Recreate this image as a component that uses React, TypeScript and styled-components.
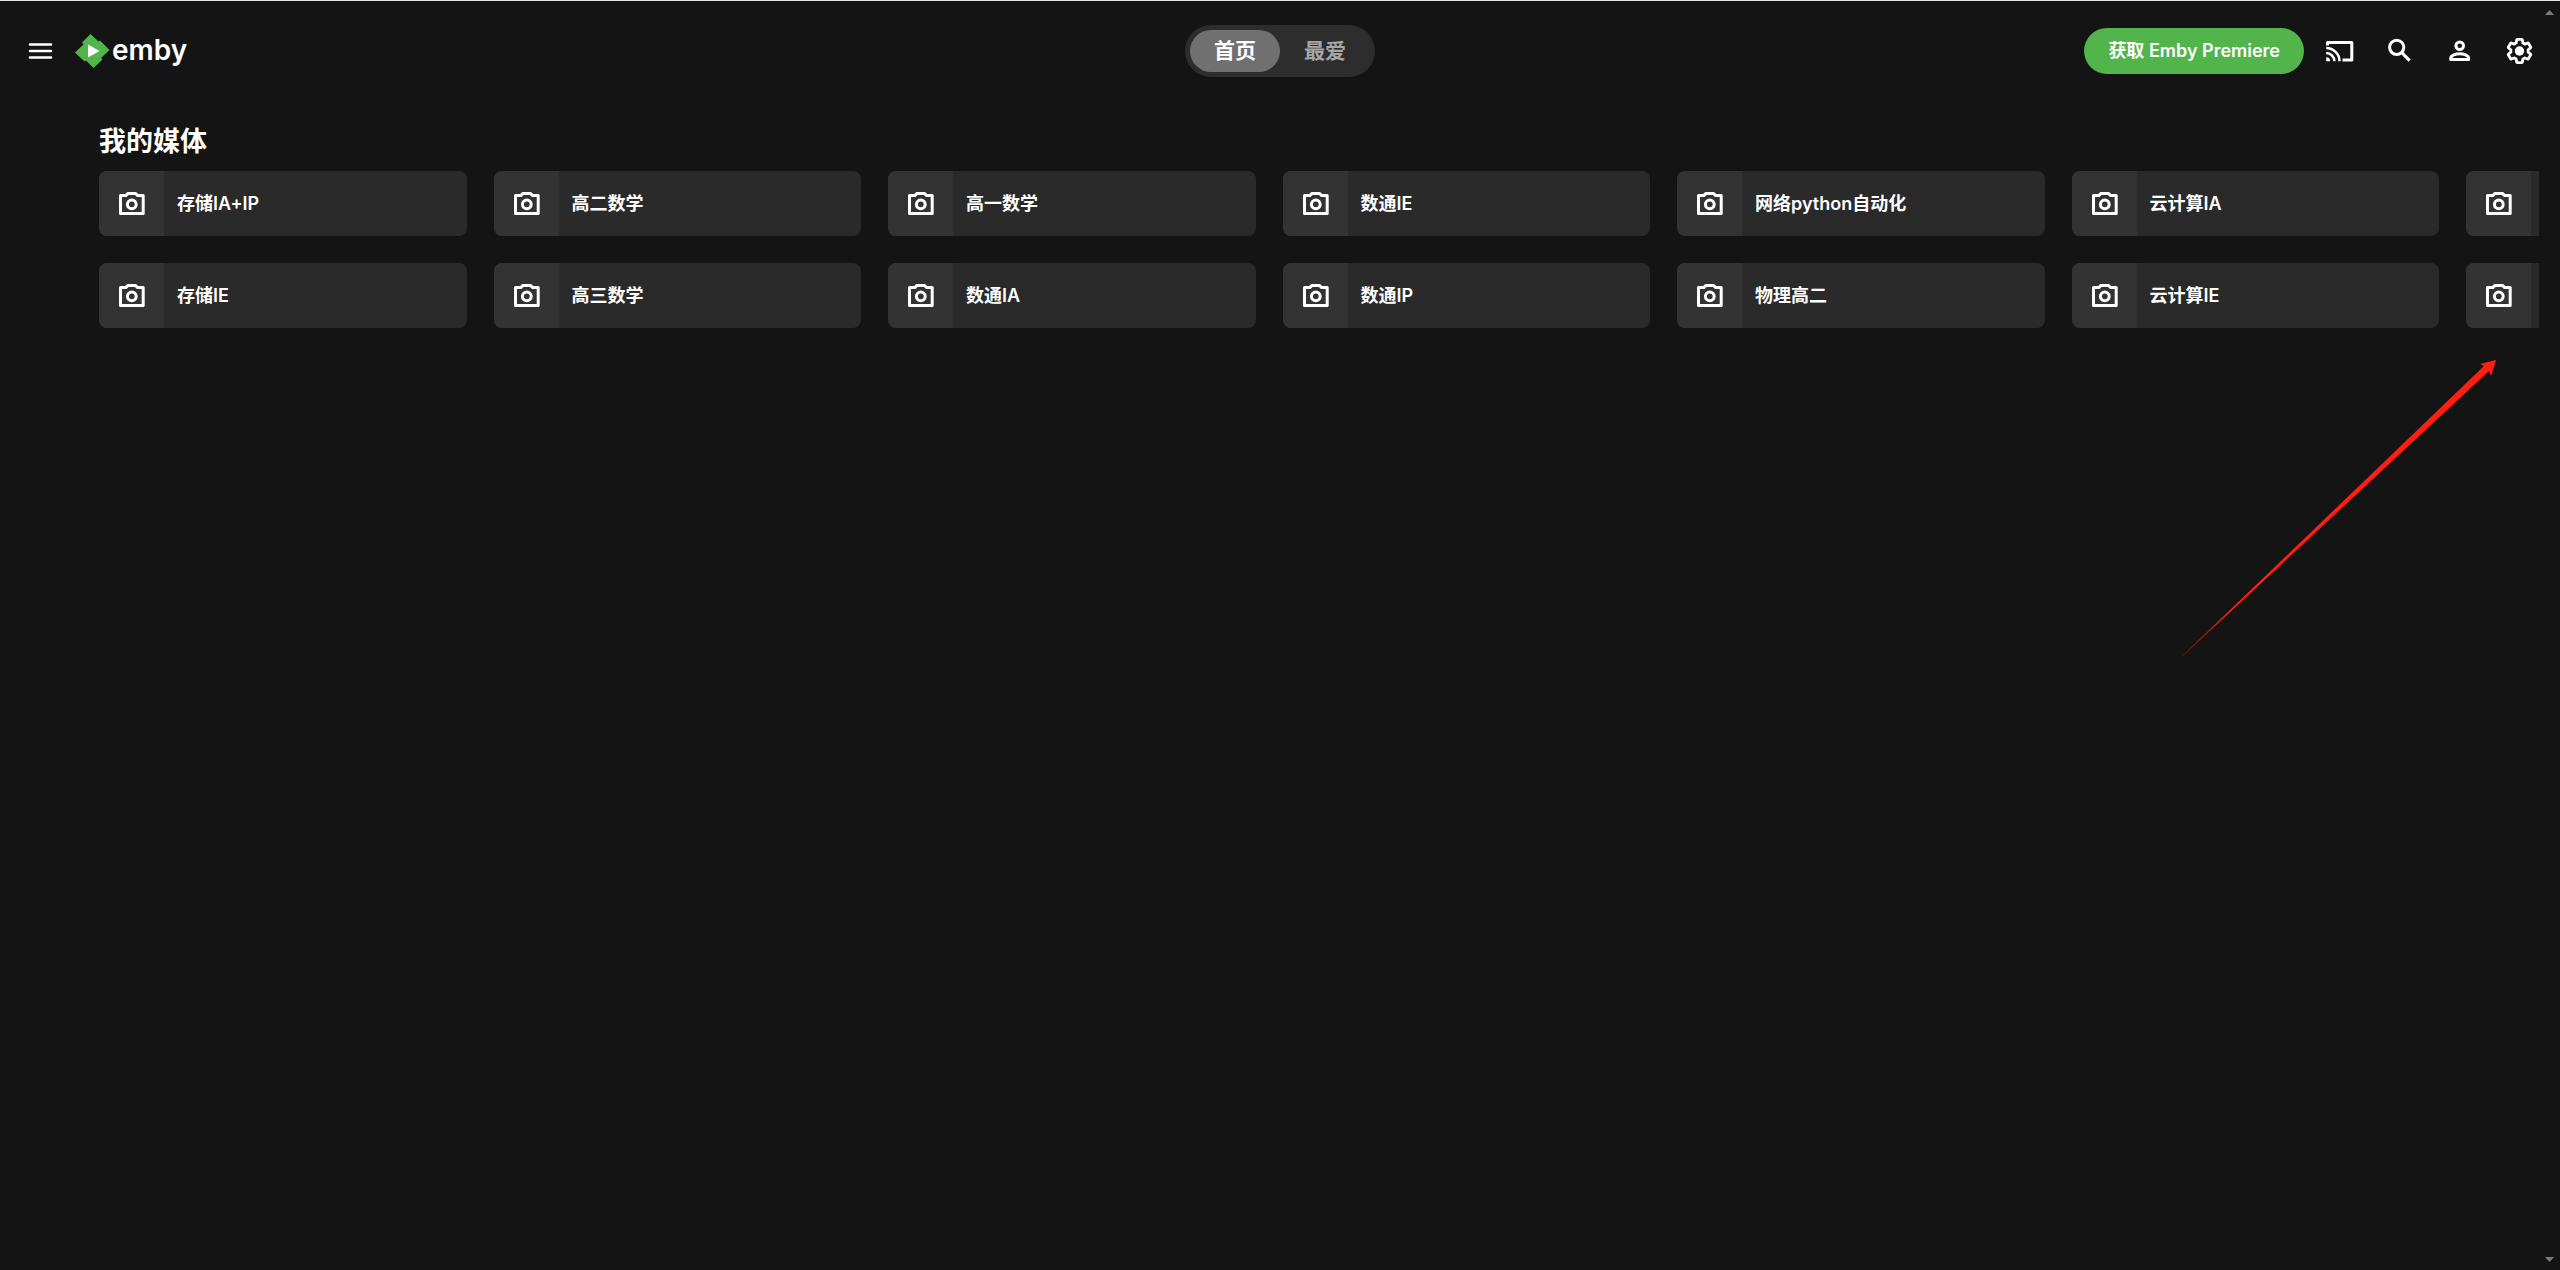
import React from "react";
import styled, { createGlobalStyle } from "styled-components";

const GlobalStyle = createGlobalStyle`
  * { box-sizing: border-box; }
  body {
    margin: 0;
    background: #141414;
    color: #fff;
    font-family: Inter, "Noto Sans CJK SC", sans-serif;
    overflow: hidden;
  }
  button { font: inherit; color: inherit; border: 0; padding: 0; background: none; cursor: pointer; }
  a { color: inherit; text-decoration: none; }
  svg { display: block; }
`;

const Page = styled.div`
  display: flex;
  min-height: 100vh;
  border-top: 1px solid #dfe6e3;
`;

const Content = styled.div`
  flex: 1;
  min-width: 0;
`;

const ScrollTrack = styled.div`
  width: 21px;
  flex: none;
  display: flex;
  flex-direction: column;
  justify-content: space-between;
  align-items: center;
  padding: 9px 0 8px;
`;

const ScrollArrow = styled.button<{ $down?: boolean }>`
  width: 9px;
  height: 5px;
  background: #7b7b7b;
  clip-path: ${(p) =>
    p.$down ? "polygon(0 0, 100% 0, 50% 100%)" : "polygon(50% 0, 100% 100%, 0 100%)"};
`;

const Header = styled.header`
  display: grid;
  grid-template-columns: 1fr auto 1fr;
  align-items: center;
  height: 100px;
  margin-right: -21px;
  padding: 0 10px;
`;

const HeaderLeft = styled.div`
  display: flex;
  align-items: center;
  gap: 5px;
`;

const HeaderRight = styled.div`
  display: flex;
  align-items: center;
  justify-content: flex-end;
`;

const IconButton = styled.button`
  width: 60px;
  height: 60px;
  display: grid;
  place-items: center;
`;

const Brand = styled.a`
  display: flex;
  align-items: center;
  gap: 2px;
`;

const Wordmark = styled.span`
  font-size: 28px;
  font-weight: 600;
  line-height: 36px;
  padding-bottom: 2px;
`;

const Tabs = styled.nav`
  display: flex;
  padding: 5px;
  border-radius: 26px;
  background: #2d2d2d;
`;

const Tab = styled.button<{ $active?: boolean }>`
  width: 90px;
  height: 42px;
  border-radius: 21px;
  font-size: 21px;
  font-weight: 700;
  line-height: 42px;
  color: ${(p) => (p.$active ? "#fff" : "#a6a6a6")};
  background: ${(p) => (p.$active ? "#707070" : "transparent")};
`;

const PremiereButton = styled.button`
  height: 46px;
  padding: 0 24px;
  margin-right: 6px;
  border-radius: 23px;
  background: #52b54b;
  font-size: 18px;
  font-weight: 600;
  line-height: 44px;
  white-space: nowrap;
`;

const Section = styled.section`
  padding-left: 99px;
`;

const Title = styled.h2`
  margin: 0;
  padding: 21px 0 9px;
  font-size: 27px;
  font-weight: 700;
  line-height: 40px;
`;

const Shelf = styled.div`
  display: grid;
  grid-auto-flow: column;
  grid-template-rows: repeat(2, 65px);
  grid-auto-columns: calc((100% - 235px) / 6);
  gap: 27px;
  overflow: hidden;
`;

const Card = styled.a`
  display: flex;
  align-items: center;
  overflow: hidden;
  border-radius: 8px;
  background: #2a2a2a;
`;

const Thumb = styled.span`
  flex: none;
  width: 65px;
  height: 65px;
  display: grid;
  place-items: center;
  background: #333;
`;

const CardName = styled.span`
  padding: 0 13px;
  font-size: 18px;
  font-weight: 600;
  line-height: 27px;
  white-space: nowrap;
`;

const Pointer = styled.svg`
  position: absolute;
  top: 360px;
  right: 64px;
  pointer-events: none;
`;

function Icon({ size = 30, children }: { size?: number; children: React.ReactNode }) {
  return (
    <svg
      width={size}
      height={size}
      viewBox={`0 0 ${size} ${size}`}
      fill="none"
      stroke="currentColor"
      strokeWidth="3"
      strokeLinejoin="round"
      aria-hidden="true"
    >
      {children}
    </svg>
  );
}

const MenuIcon = () => (
  <Icon>
    <path strokeLinecap="round" strokeWidth="2.6" d="M5 8.500H26M5 15H26M5 21.500H26" />
  </Icon>
);

const CastIcon = () => (
  <Icon>
    <path d="M2.500 9.500V6.500H26.800V23.900H17.500" />
    <path strokeWidth="2.500" d="M1.200 17.100A8.200 8.200 0 0 1 9.400 25.300M1.200 12A13.300 13.300 0 0 1 14.500 25.300" />
    <path fill="currentColor" stroke="none" d="M1.200 21.300A4 4 0 0 1 5.200 25.300H1.200Z" />
  </Icon>
);

const SearchIcon = () => (
  <Icon>
    <circle cx="11.700" cy="11.300" r="7.100" />
    <path strokeWidth="3.200" d="M16.700 16.500L24.600 24.600" />
  </Icon>
);

const PersonIcon = () => (
  <Icon>
    <circle cx="14.700" cy="9.800" r="3.800" />
    <path d="M5.800 23.600H23.600V22C23.600 19.500 18.600 17.700 14.700 17.700S5.800 19.500 5.800 22Z" />
  </Icon>
);

const SettingsIcon = () => (
  <Icon>
    <path
      strokeWidth="2.400"
      transform="translate(0.600 1.100) scale(1.160)"
      d="M19.430 12.980c.04-.32.07-.64.07-.98 0-.34-.03-.66-.07-.98l2.110-1.650c.19-.15.24-.42.12-.64l-2-3.460a.5.5 0 0 0-.61-.22l-2.490 1c-.52-.4-1.080-.73-1.690-.98l-.38-2.650A.488.488 0 0 0 14 2h-4c-.25 0-.46.18-.49.42l-.38 2.650c-.61.25-1.170.59-1.690.98l-2.490-1a.5.5 0 0 0-.61.22l-2 3.460c-.13.22-.07.49.12.64l2.110 1.650c-.04.32-.07.65-.07.98 0 .33.03.66.07.98l-2.110 1.650c-.19.15-.24.42-.12.64l2 3.460c.12.22.39.3.61.22l2.490-1c.52.4 1.080.73 1.690.98l.38 2.650c.03.24.24.42.49.42h4c.25 0 .46-.18.49-.42l.38-2.650c.61-.25 1.170-.59 1.690-.98l2.490 1c.22.08.49 0 .61-.22l2-3.460c.12-.22.07-.49-.12-.64z"
    />
    <circle cx="14.500" cy="15" r="4.700" fill="currentColor" stroke="none" />
  </Icon>
);

const CameraIcon = () => (
  <Icon size={31}>
    <path d="M4.500 7.600H9.800L12 5.400H19.400L21.700 7.600H27.200V25.600H4.500Z" />
    <circle cx="15.800" cy="16.300" r="4.400" />
  </Icon>
);

const LIBRARIES = [
  "存储IA+IP", "存储IE",
  "高二数学", "高三数学",
  "高一数学", "数通IA",
  "数通IE", "数通IP",
  "网络python自动化", "物理高二",
  "云计算IA", "云计算IE",
  "", "",
];

export default function App() {
  return (
    <Page>
      <GlobalStyle />
      <Content>
        <Header>
          <HeaderLeft>
            <IconButton aria-label="菜单"><MenuIcon /></IconButton>
            <Brand href="#">
              <svg width="35" height="35" viewBox="0 0 35 35" aria-hidden="true">
                <path fill="#52b54b" d="M15.500 0L23.500 7.500L25 6.500L34.500 16L26 24L27.500 25.500L18.500 34L11 26.500L9.500 27.500L0 18.500L8.500 10.500L7 8.500Z" />
                <path fill="#fff" d="M13 10.500L24.500 17L13 23.500Z" />
              </svg>
              <Wordmark>emby</Wordmark>
            </Brand>
          </HeaderLeft>
          <Tabs>
            <Tab $active>首页</Tab>
            <Tab>最爱</Tab>
          </Tabs>
          <HeaderRight>
            <PremiereButton>获取 Emby Premiere</PremiereButton>
            <IconButton aria-label="投放"><CastIcon /></IconButton>
            <IconButton aria-label="搜索"><SearchIcon /></IconButton>
            <IconButton aria-label="用户"><PersonIcon /></IconButton>
            <IconButton aria-label="设置"><SettingsIcon /></IconButton>
          </HeaderRight>
        </Header>
        <Section>
          <Title>我的媒体</Title>
          <Shelf>
            {LIBRARIES.map((name, i) => (
              <Card key={i} href="#" aria-label={name || "媒体库"}>
                <Thumb><CameraIcon /></Thumb>
                {name && <CardName>{name}</CardName>}
              </Card>
            ))}
          </Shelf>
        </Section>
      </Content>
      <ScrollTrack>
        <ScrollArrow aria-label="向上滚动" />
        <ScrollArrow $down aria-label="向下滚动" />
      </ScrollTrack>
      <Pointer width="316" height="298" viewBox="0 0 316 298" aria-hidden="true">
        <defs>
          <linearGradient id="tail" gradientUnits="userSpaceOnUse" x1="2" y1="297" x2="50" y2="252">
            <stop offset="0" stopColor="#ff1e10" stopOpacity="0.3" />
            <stop offset="1" stopColor="#ff1e10" />
          </linearGradient>
        </defs>
        <path fill="url(#tail)" d="M2 296L304 6L300 4L316 0L311 16L309 11L3 296Z" />
      </Pointer>
    </Page>
  );
}
